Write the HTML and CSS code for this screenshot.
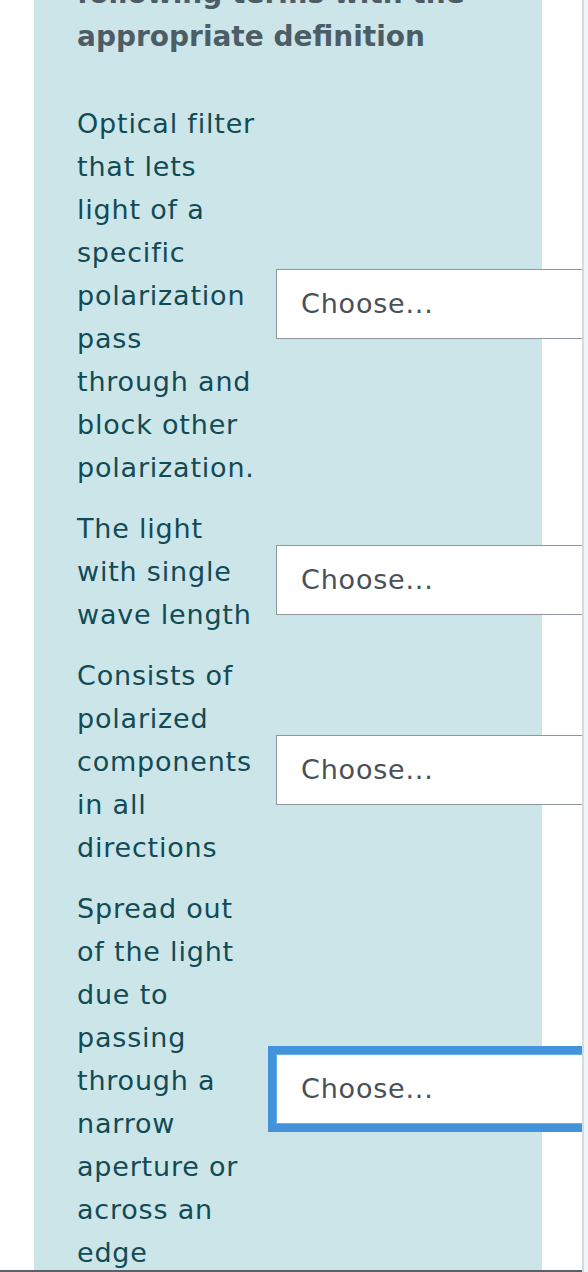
FILE: index.html
```html
<!DOCTYPE html>
<html lang="en">
<head>
<meta charset="utf-8">
<title>Match the terms</title>
<link rel="stylesheet" href="styles.css">
</head>
<body>
<div class="page">
  <section class="panel">
    <h2 class="prompt">following terms with the<br>appropriate definition</h2>
    <div class="rows">
      <div class="row">
        <label class="term" for="q1">Optical filter<br>that lets<br>light of a<br>specific<br>polarization<br>pass<br>through and<br>block other<br>polarization.</label>
        <select class="choice" id="q1"><option>Choose...</option></select>
      </div>
      <div class="row">
        <label class="term" for="q2">The light<br>with single<br>wave length</label>
        <select class="choice" id="q2"><option>Choose...</option></select>
      </div>
      <div class="row">
        <label class="term" for="q3">Consists of<br>polarized<br>components<br>in all<br>directions</label>
        <select class="choice" id="q3"><option>Choose...</option></select>
      </div>
      <div class="row">
        <label class="term" for="q4">Spread out<br>of the light<br>due to<br>passing<br>through a<br>narrow<br>aperture or<br>across an<br>edge</label>
        <select class="choice is-focused" id="q4"><option>Choose...</option></select>
      </div>
    </div>
  </section>
</div>
<div class="bottom-edge"></div>
</body>
</html>
```

FILE: styles.css
```css
html {
  background: #eef4f7;
}

body {
  margin: 0;
  font-family: "DejaVu Sans", "Open Sans", sans-serif;
}

.page {
  width: 582px;
  height: 1272px;
  background: #ffffff;
  border-right: 2px solid #d4dce1;
  overflow: hidden;
}

.panel {
  margin-left: 34px;
  width: 465px;
  padding-left: 43px;
  padding-bottom: 80px;
  background: #cce5e9;
}

.prompt {
  margin: -28px 0 0;
  padding: 0 0 44px;
  font-size: 28px;
  line-height: 43px;
  font-weight: 700;
  color: #4d5d66;
}

.rows {
  display: flex;
  flex-direction: column;
  gap: 2px;
}

.row {
  display: flex;
  align-items: center;
}

.term {
  flex: 0 0 199px;
  padding-bottom: 16px;
  font-size: 27px;
  line-height: 43px;
  letter-spacing: 0.8px;
  color: #114b56;
}

.choice {
  flex: 0 0 auto;
  width: 330px;
  height: 70px;
  margin: 0;
  padding: 0 0 0 24px;
  border: 1px solid #8f959d;
  border-radius: 0;
  background: #ffffff;
  -webkit-appearance: none;
  appearance: none;
  font-family: inherit;
  font-size: 27px;
  letter-spacing: 0.8px;
  color: #495057;
}

.choice.is-focused {
  border-color: #66aee8;
  box-shadow: 0 0 0 8px #4393db;
  outline: none;
}

.bottom-edge {
  position: fixed;
  left: 0;
  bottom: 0;
  width: 582px;
  height: 2px;
  background: #5c6166;
}
```
